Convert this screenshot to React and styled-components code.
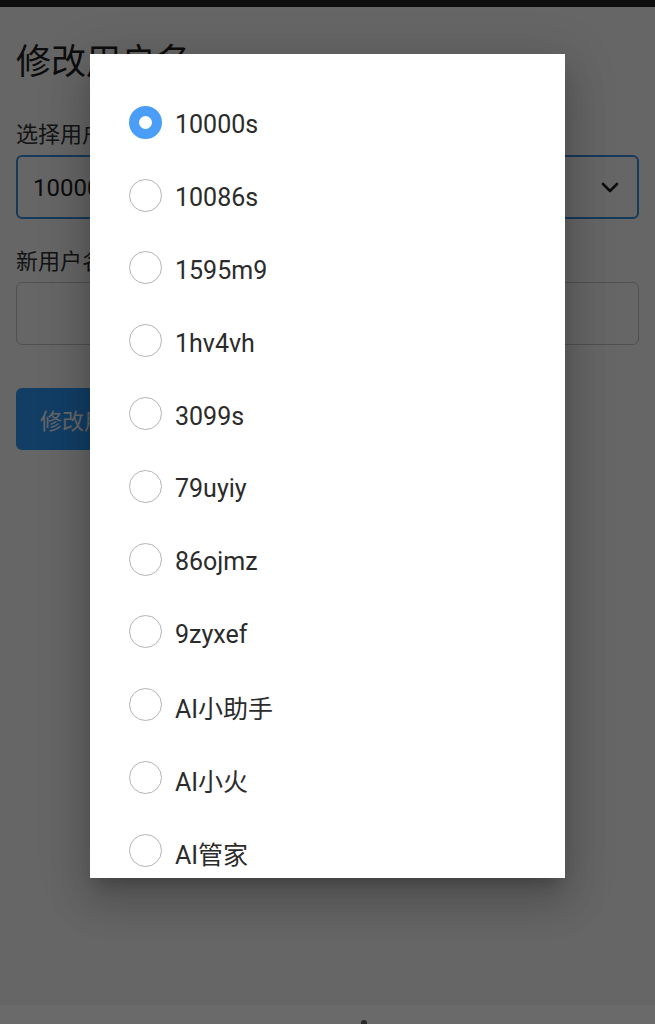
import React from 'react'
import styled, { createGlobalStyle } from 'styled-components'

const GlobalStyle = createGlobalStyle`
    html, body {
        margin: 0;
        padding: 0;
        background: #111;
    }
    body {
        font-family: Roboto, "Noto Sans CJK SC", sans-serif;
        color: #222;
    }
    * {
        box-sizing: border-box;
    }
`

const Screen = styled.div`
    display: flex;
    flex-direction: column;
    width: 655px;
    height: 1024px;
    overflow: hidden;
`

const StatusBar = styled.div`
    height: 7px;
    background: #0e0e0e;
    flex-shrink: 0;
`

const Viewport = styled.div`
    position: relative;
    flex: 1;
    background: #fff;
    overflow: hidden;
`

const Form = styled.div`
    display: flex;
    flex-direction: column;
    align-items: flex-start;
    padding: 34px 16px 0;
`

const Title = styled.h2`
    margin: 0;
    font-size: 35px;
    line-height: 44px;
    font-weight: 400;
    color: #222;
`

const Label = styled.label`
    display: block;
    margin-top: ${p => p.gap}px;
    font-size: 22px;
    line-height: 30px;
    color: #333;
`

const Field = styled.div`
    display: flex;
    align-items: center;
    justify-content: space-between;
    align-self: stretch;
    height: ${p => p.h}px;
    margin-top: 5px;
    padding: 2px 18px 0 15px;
    border: ${p => (p.focused ? '2px solid #3b8fe0' : '1px solid #c8c8c8')};
    border-radius: 6px;
    font-size: 24px;
    color: #222;
`

const Chevron = () => (
    <svg width="18" height="12" viewBox="0 0 18 12">
        <path d="M2 2 L9 9 L16 2" fill="none" stroke="#222" strokeWidth="2.6" strokeLinecap="round" strokeLinejoin="round" />
    </svg>
)

const SubmitButton = styled.button`
    margin-top: 43px;
    height: 62px;
    padding: 0 24px;
    border: none;
    border-radius: 6px;
    background: #2e9bff;
    color: #fff;
    font-family: inherit;
    font-size: 22px;
`

const Backdrop = styled.div`
    position: absolute;
    inset: 0;
    display: flex;
    justify-content: center;
    align-items: flex-start;
    padding-top: 47px;
    background: rgba(0, 0, 0, 0.6);
`

const Dialog = styled.div`
    width: 475px;
    height: 824px;
    padding-top: 32px;
    background: #fff;
    overflow: hidden;
    box-shadow: 0 24px 38px 3px rgba(0, 0, 0, 0.14),
        0 9px 46px 8px rgba(0, 0, 0, 0.12),
        0 11px 15px -7px rgba(0, 0, 0, 0.2);
`

const Option = styled.div`
    display: flex;
    align-items: center;
    height: 72.8px;
    padding-left: 39px;
    gap: 13px;
    font-size: 25px;
    color: #2b2b2b;
`

const OptionName = styled.span`
    padding-top: 5px;
`

const Radio = styled.span`
    width: 33px;
    height: 33px;
    flex-shrink: 0;
    border-radius: 50%;
    border: ${p => (p.checked ? '10.5px solid #4b9ef8' : '1.5px solid #b4b4b4')};
    background: #fff;
`

const NavBar = styled.div`
    height: 19px;
    flex-shrink: 0;
    background: #6a6a6a;
    display: flex;
    justify-content: center;
    align-items: flex-end;
`

const NavDot = styled.span`
    width: 6px;
    height: 6px;
    margin-left: 72px;
    margin-bottom: -2px;
    border-radius: 50%;
    background: #2a2a2a;
`

const users = ['10000s', '10086s', '1595m9', '1hv4vh', '3099s', '79uyiy', '86ojmz', '9zyxef', 'AI小助手', 'AI小火', 'AI管家']

const App = () => (
    <Screen>
        <GlobalStyle />
        <StatusBar />
        <Viewport>
            <Form>
                <Title>修改用户名</Title>
                <Label gap={35}>选择用户</Label>
                <Field h={64} focused>
                    <span>10000s</span>
                    <Chevron />
                </Field>
                <Label gap={28}>新用户名</Label>
                <Field h={63} />
                <SubmitButton>修改用户名</SubmitButton>
            </Form>
            <Backdrop>
                <Dialog>
                    {users.map((u, i) => (
                        <Option key={u}>
                            <Radio checked={i === 0} />
                            <OptionName>{u}</OptionName>
                        </Option>
                    ))}
                </Dialog>
            </Backdrop>
        </Viewport>
        <NavBar>
            <NavDot />
        </NavBar>
    </Screen>
)

export default App
